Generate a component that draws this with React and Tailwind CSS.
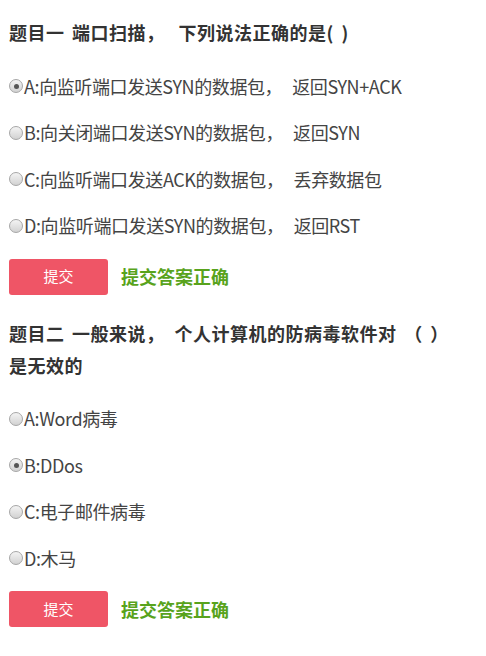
import React from "react";

const font = { fontFamily: '"Noto Sans CJK SC", "Noto Sans", sans-serif' };

function withCommas(text, cls) {
  const parts = text.split("，");
  const out = [];
  parts.forEach((p, i) => {
    out.push(<React.Fragment key={"t" + i}>{p}</React.Fragment>);
    if (i < parts.length - 1) {
      out.push(
        <span key={"c" + i} className={cls}>
          ，
        </span>
      );
    }
  });
  return out;
}

function Radio({ checked }) {
  return (
    <span className="relative inline-block w-[14px] h-[14px] rounded-full border border-[#a6a6a6] bg-gradient-to-b from-[#f4f4f4] to-[#d2d2d2] shrink-0">
      {checked && (
        <span className="absolute left-[3.5px] top-[3.5px] w-[5px] h-[5px] rounded-full bg-[#555]" />
      )}
    </span>
  );
}

function Question({ title, options, checkedIndex, titleCommaCls }) {
  return (
    <div>
      <div className="text-[18px] font-bold text-[#333] leading-[32px] pr-[24px] tracking-[0.5px] [word-spacing:3px]">
        {withCommas(title, titleCommaCls)}
      </div>
      <div className="mt-[26px] flex flex-col gap-[22.5px]">
        {options.map((o, i) => (
          <div key={i} className="flex items-center h-[24px] text-[18px] text-[#444]">
            <Radio checked={i === checkedIndex} />
            <span className="ml-[1px] tracking-[-0.4px]">{withCommas(o, "mr-[10px]")}</span>
          </div>
        ))}
      </div>
      <div className="mt-[21px] flex items-center">
        <button className="w-[99px] h-[36px] rounded-[3px] bg-[#ef5566] text-white text-[15px]">提交</button>
        <span className="ml-[13px] text-[18px] font-bold text-[#58a31c]">提交答案正确</span>
      </div>
    </div>
  );
}

export default function App() {
  return (
    <div className="w-[486px] h-[656px] bg-white pl-[9px] pt-[16px]" style={font}>
      <Question
        title={"题目一 端口扫描，下列说法正确的是(\u00a0)"}
        titleCommaCls="mr-[14px]"
        options={[
          "A:向监听端口发送SYN的数据包，返回SYN+ACK",
          "B:向关闭端口发送SYN的数据包，返回SYN",
          "C:向监听端口发送ACK的数据包，丢弃数据包",
          "D:向监听端口发送SYN的数据包，返回RST",
        ]}
        checkedIndex={0}
      />
      <div className="mt-[22px]">
        <Question
          title={"题目二 一般来说，个人计算机的防病毒软件对 （\u00a0）是无效的"}
          titleCommaCls="mr-[10px]"
          options={["A:Word病毒", "B:DDos", "C:电子邮件病毒", "D:木马"]}
          checkedIndex={1}
        />
      </div>
    </div>
  );
}
